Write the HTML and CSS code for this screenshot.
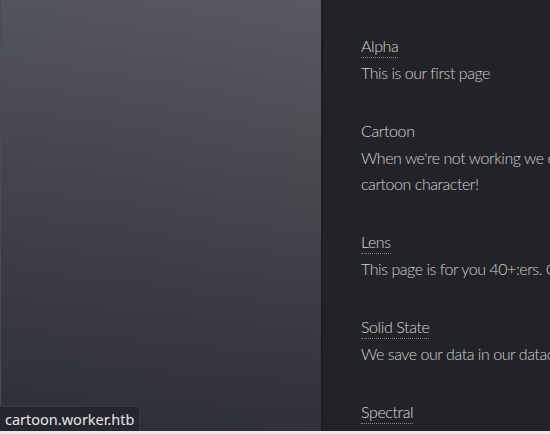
FILE: index.html
```html
<!DOCTYPE html>
<html lang="en">
<head>
<meta charset="utf-8">
<title>Worker</title>
<link rel="stylesheet" href="styles.css">
</head>
<body>
<div class="page">
  <div class="hero"></div>
  <div class="content">
    <div class="list">
      <section class="item">
        <a class="title" href="#">Alpha</a>
        <p class="text">This is our first page</p>
      </section>
      <section class="item">
        <a class="title plain" href="#">Cartoon</a>
        <p class="text">When we're not working we enjoy dressing up as our favourite<br>cartoon character!</p>
      </section>
      <section class="item">
        <a class="title" href="#">Lens</a>
        <p class="text">This page is for you 40+:ers. Can't see the text? Try our new zoomable page!</p>
      </section>
      <section class="item">
        <a class="title" href="#">Solid State</a>
        <p class="text">We save our data in our datacenter, in solid state drives.</p>
      </section>
      <section class="item">
        <a class="title" href="#">Spectral</a>
        <p class="text">Our colourful spectral page.</p>
      </section>
    </div>
  </div>
</div>
<div class="status">cartoon.worker.htb</div>
<div class="edge"></div>
</body>
</html>
```
FILE: styles.css
```css
html, body {
  margin: 0;
  padding: 0;
  width: 550px;
  height: 434px;
  overflow: hidden;
  background: #212226;
}
body {
  display: flex;
  flex-direction: column;
  font-family: Lato, "Liberation Sans", sans-serif;
}
.page {
  display: flex;
  height: 431px;
  overflow: hidden;
}
.hero {
  flex: 0 0 321px;
  border-left: 1px solid #4a4c55;
  box-sizing: border-box;
  background:
    linear-gradient(to right, rgba(40, 46, 60, 0.18), rgba(80, 60, 60, 0.10)),
    linear-gradient(to bottom, #5b5c65 0%, #4c4b54 35%, #3e3d47 65%, #2c2f3a 100%);
}
.content {
  flex: 1 0 auto;
  background: #222327;
  border-left: 2px solid #1c1d21;
  padding: 35px 0 0 38px;
}
.list {
  width: 600px;
}
.item {
  margin: 0 0 34px;
}
.title {
  display: inline-block;
  font-size: 16px;
  font-weight: 300;
  letter-spacing: -0.4px;
  line-height: 22px;
  color: #d6d6d8;
  text-decoration: none;
  border-bottom: 1px dotted rgba(255, 255, 255, 0.45);
  margin-bottom: 2px;
}
.title.plain {
  border-bottom-color: transparent;
}
.text {
  margin: 0;
  font-size: 16px;
  font-weight: 300;
  letter-spacing: -0.45px;
  line-height: 26px;
  color: #d0d0d2;
}
.status {
  position: absolute;
  left: 0;
  bottom: 3px;
  height: 25px;
  box-sizing: border-box;
  padding: 0 5px;
  background: #25272e;
  border: 1px solid #383a42;
  border-left: 0;
  border-bottom: 0;
  border-top-right-radius: 3px;
  font-family: "Noto Sans", sans-serif;
  font-size: 14.5px;
  line-height: 24px;
  color: #e6e6e8;
}
.edge {
  height: 3px;
  background: #e9e9ec;
}
```
